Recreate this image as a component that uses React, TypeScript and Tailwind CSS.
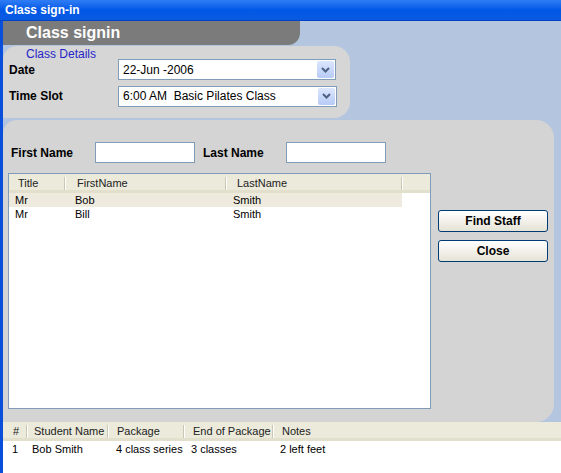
import React from 'react';

const font = { fontFamily: '"Liberation Sans", Arial, sans-serif' };

function Combo({ value, width }: { value: string; width: string }) {
  return (
    <div className={`${width} h-[21px] border border-[#7f9db9] bg-white flex items-center justify-between pl-[4px] pr-[1px]`}>
      <span className="text-[12px] text-black leading-none whitespace-pre">{value}</span>
      <div className="w-[17px] h-[17px] rounded-[2px] bg-gradient-to-b from-[#dce6fd] to-[#b7cbf7] flex items-center justify-center">
        <svg width="9" height="6" viewBox="0 0 9 6">
          <polyline points="1,1 4.5,4.5 8,1" fill="none" stroke="#4d6185" strokeWidth="2" />
        </svg>
      </div>
    </div>
  );
}

function Sep() {
  return <div className="w-[2px] h-[13px] border-l border-[#c9c6b4] border-r border-r-white" />;
}

const staff = [
  { title: 'Mr', first: 'Bob', last: 'Smith', selected: true },
  { title: 'Mr', first: 'Bill', last: 'Smith', selected: false },
];

export default function App() {
  return (
    <div className="w-[561px] h-[473px] flex flex-col bg-[#b4c6df] overflow-hidden" style={font}>
      {/* title bar */}
      <div className="h-[21px] shrink-0 bg-gradient-to-b from-[#2f7df5] via-[#0058e6] to-[#0a5ae0] border-b border-[#0043c8] flex items-center pl-[5px]">
        <span className="text-white font-bold text-[12px]">Class sign-in</span>
      </div>

      <div className="flex flex-1">
        <div className="w-[3px] bg-[#0a4fdc] shrink-0" />
        <div className="flex-1 flex flex-col">
          {/* header tab */}
          <div className="w-[297px] h-[24px] bg-[#7b7b7b] rounded-br-[12px] flex items-center pl-[23px]">
            <span className="text-white font-bold text-[16px]">Class signin</span>
          </div>

          {/* class details */}
          <div className="mt-[1px] w-[347px] h-[72px] bg-[#d6d6d6] rounded-tl-[14px] rounded-r-[16px] pt-[2px]">
            <div className="h-[11px] pl-[23px] text-[12px] leading-[13px] text-[#2424c8]">Class Details</div>
            <div className="flex items-center h-[21px]">
              <div className="w-[115px] pl-[6px] font-bold text-[12px]">Date</div>
              <Combo value="22-Jun -2006" width="w-[218px]" />
            </div>
            <div className="flex items-center h-[22px] mt-[5px]">
              <div className="w-[115px] pl-[6px] font-bold text-[12px]">Time Slot</div>
              <Combo value="6:00 AM  Basic Pilates Class" width="w-[219px]" />
            </div>
          </div>

          {/* staff search */}
          <div className="mt-[2px] w-[551px] h-[302px] bg-[#d4d4d4] rounded-tl-[14px] rounded-r-[18px] pt-[22px] flex flex-col">
            <div className="flex items-center h-[21px]">
              <div className="w-[92px] pl-[8px] font-bold text-[12px]">First Name</div>
              <div className="w-[100px] h-[21px] bg-white border border-[#7f9db9]" />
              <div className="w-[91px] pl-[8px] font-bold text-[12px]">Last Name</div>
              <div className="w-[100px] h-[21px] bg-white border border-[#7f9db9]" />
            </div>
            <div className="flex mt-[10px]">
              <div className="ml-[5px] w-[423px] h-[236px] bg-white border border-[#7f9db9] flex flex-col text-[11px]">
                <div className="h-[19px] pt-[2px] bg-[#ebeadb] border-b-[3px] border-[#e2dfcd] flex items-center text-[#222]">
                  <div className="w-[55px] pl-[9px]">Title</div>
                  <Sep />
                  <div className="w-[159px] pl-[11px]">FirstName</div>
                  <Sep />
                  <div className="w-[174px] pl-[10px]">LastName</div>
                  <Sep />
                </div>
                {staff.map((s) => (
                  <div
                    key={s.first}
                    className={`h-[14px] w-[393px] flex items-center text-black ${s.selected ? 'bg-[#eeebde]' : ''}`}
                  >
                    <div className="w-[60px] pl-[6px]">{s.title}</div>
                    <div className="w-[158px] pl-[6px]">{s.first}</div>
                    <div className="pl-[6px]">{s.last}</div>
                  </div>
                ))}
              </div>
              <div className="ml-[7px] pt-[37px] flex flex-col gap-[8px]">
                {['Find Staff', 'Close'].map((b) => (
                  <button
                    key={b}
                    className="w-[110px] h-[22px] rounded-[3px] border border-[#003c74] bg-gradient-to-b from-white to-[#e6e3d6] font-bold text-[12px] text-black"
                  >
                    {b}
                  </button>
                ))}
              </div>
            </div>
          </div>

          {/* bottom grid */}
          <div className="flex-1 bg-white flex flex-col text-[11px] text-black">
            <div className="h-[19px] pt-[2px] bg-[#ebeadb] border-b-[3px] border-[#e2dfcd] flex items-center text-[#222]">
              <div className="w-[23px] pl-[10px]">#</div>
              <Sep />
              <div className="w-[79px] pl-[6px]">Student Name</div>
              <Sep />
              <div className="w-[74px] pl-[8px]">Package</div>
              <Sep />
              <div className="w-[87px] pl-[8px]">End of Package</div>
              <Sep />
              <div className="pl-[8px]">Notes</div>
            </div>
            <div className="h-[16px] flex items-center">
              <div className="w-[26px] pl-[9px]">1</div>
              <div className="w-[87px] pl-[3px]">Bob Smith</div>
              <div className="w-[75px]">4 class series</div>
              <div className="w-[89px]">3 classes</div>
              <div>2 left feet</div>
            </div>
          </div>
        </div>
      </div>
    </div>
  );
}
